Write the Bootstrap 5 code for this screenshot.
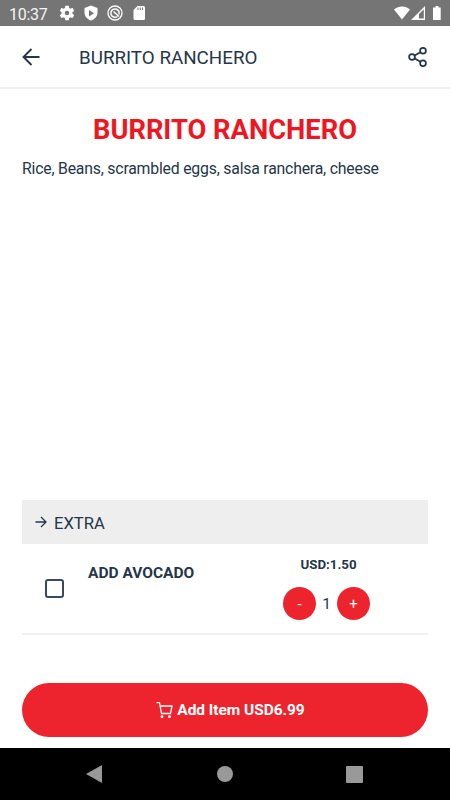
<!DOCTYPE html>
<html lang="en">
<head>
<meta charset="utf-8">
<meta name="viewport" content="width=device-width, initial-scale=1">
<title>Burrito Ranchero</title>
<link href="https://cdn.jsdelivr.net/npm/bootstrap@5.3.0/dist/css/bootstrap.min.css" rel="stylesheet">
<style>
  body { font-family: Roboto, "Liberation Sans", sans-serif; color: #25364a; line-height: 1.2; overflow: hidden; }
  svg { display: block; flex: none; }
  .screen { height: 800px; }
  .status-bar { height: 26px; background: #757575; padding: 0 7px 0 9px; }
  .clock { font-size: 16px; width: 50px; color: #f4f4f4; letter-spacing: -.3px; padding-top: 3px; }
  .app-bar { height: 63px; border-bottom: 2px solid #f0f0f0; padding: 0 22px 0 21px; }
  .app-title { font-size: 18.8px; margin-left: 37px; padding-top: 4px; }
  .content { padding: 0 22px; }
  .dish-name { font-size: 27.3px; color: #ee1621; margin: 25px 0 0; line-height: 32px; }
  .dish-text { font-size: 15.8px; letter-spacing: -.2px; line-height: 20px; margin: 13px 0 0; }
  .options { margin-bottom: 48px; }
  .group-head { height: 44px; background: #eee; font-size: 16.6px; padding-left: 13px; gap: 7px; }
  .group-name { padding-top: 3px; }
  .option { height: 91px; border-bottom: 2px solid #f1f1f1; }
  .option-check { width: 19px; height: 19px; margin: 35px 0 0 23px; border: 2px solid #3a495d; border-radius: 3px; background: #fff; }
  .option-name { font-size: 15.5px; line-height: 20px; margin: 19px 0 0 24px; }
  .option-side { width: 87px; margin-right: 58px; }
  .price { font-size: 13.3px; line-height: 18px; margin: 12px 0 0 4px; }
  .stepper { margin-top: 13px; font-size: 15.5px; }
  .step-count { padding-top: 2px; }
  .round-btn { width: 33px; height: 33px; background: #ed242e; color: #fff; font-size: 15px; line-height: 1; padding: 2px 0 0; }
  .buy { height: 54px; margin: 0 22px 11px; background: #ed242e; color: #fff; font-size: 15.5px; letter-spacing: -.05px; }
  .buy-label { padding-top: 2px; }
  .buy-inner { gap: 4px; margin-left: 11px; }
  .nav-keys { height: 52px; background: #000; padding: 0 87px 0 86px; }
</style>
<script src="https://cdn.jsdelivr.net/npm/bootstrap@5.3.0/dist/js/bootstrap.bundle.min.js"></script>
</head>
<body>
<div class="screen d-flex flex-column bg-white">
  <div class="status-bar d-flex align-items-center">
    <span class="clock">10:37</span>
    <svg width="16" height="16" viewBox="1.500 1.500 21 21" fill="#fff"><path d="M19.14 12.94c.04-.3.06-.61.06-.94s-.02-.64-.07-.94l2.03-1.58a.5.5 0 0 0 .12-.61l-1.92-3.32a.5.5 0 0 0-.59-.22l-2.39.96a7 7 0 0 0-1.62-.94l-.36-2.54A.48.48 0 0 0 13.92 2.400h-3.84a.48.48 0 0 0-.47.41l-.36 2.54c-.59.24-1.13.57-1.62.94l-2.39-.96a.5.5 0 0 0-.59.22L2.740 8.870a.48.48 0 0 0 .12.61l2.03 1.58a6 6 0 0 0 0 1.880l-2.030 1.580a.5.5 0 0 0-.12.61l1.920 3.320c.12.22.37.29.59.22l2.390-.96c.5.38 1.030.7 1.620.94l.36 2.540c.05.24.24.41.48.41h3.840c.24 0 .44-.17.47-.41l.36-2.540c.59-.24 1.130-.56 1.620-.94l2.390.96c.22.08.47 0 .59-.22l1.920-3.320a.48.48 0 0 0-.12-.61zM12 15a3 3 0 1 1 0-6 3 3 0 0 1 0 6z"/></svg>
    <svg class="ms-2" width="16" height="16" viewBox="0 0 16 16"><path fill="#fff" d="M8 .5 14.500 3v4.500c0 3.700-2.500 6.700-6.500 8-4-1.300-6.500-4.300-6.500-8V3z"/><path fill="#757575" d="m6 5 5 3.200-5 3.200z"/></svg>
    <svg class="ms-2" width="16" height="16" viewBox="0 0 16 16" fill="none" stroke="#fff"><circle cx="8" cy="8" r="7" stroke-width="1.300"/><path d="M10.500 11.500a4.200 4.200 0 1 1 1.500-2" stroke-width="1.500"/><path d="m6.500 6.500 5.500 5" stroke-width="1.500"/></svg>
    <svg class="ms-2" width="16" height="16" viewBox="0 0 16 16"><path fill="#fff" d="M6.500 1H12.500q1.500 0 1.500 1.500v11Q14 15 12.500 15H4q-1.500 0-1.500-1.500V5z"/><path stroke="#757575" d="M7 2.500V5M9.300 2.500V5M11.600 2.500V5"/></svg>
    <svg class="ms-auto" width="50" height="16" viewBox="0 0 50 16"><path fill="#fff" d="M1 4.500C5.500.5 12.500.5 17 4.500L9 14.500z"/><path fill="#fff" fill-rule="evenodd" d="M32 1v14H18zM30.800 4.200v9.300H26V9z"/><path fill="#fff" d="M42.500 1h3v1.500h2.200V15h-7.700V2.500h2.500z"/></svg>
  </div>
  <header class="app-bar d-flex align-items-center">
    <svg width="21" height="20" viewBox="0 0 21 20" fill="none" stroke="#25364a" stroke-width="1.900"><path d="M18.500 10H2.500M10.500 2 2.500 10l8 8"/></svg>
    <span class="app-title">BURRITO RANCHERO</span>
    <svg class="ms-auto" width="20" height="20" viewBox="0 0 20 20" fill="none" stroke="#25364a" stroke-width="1.700"><circle cx="4" cy="10" r="2.900"/><circle cx="15" cy="3.800" r="2.900"/><circle cx="15" cy="16.200" r="2.900"/><path d="m6.600 8.600 5.800-3.300M6.600 11.400l5.800 3.300"/></svg>
  </header>
  <main class="content flex-grow-1 d-flex flex-column">
    <h1 class="dish-name text-center fw-bold">BURRITO RANCHERO</h1>
    <p class="dish-text">Rice, Beans, scrambled eggs, salsa ranchera, cheese</p>
    <section class="options mt-auto">
      <div class="group-head d-flex align-items-center">
        <svg width="12" height="12" viewBox="0 0 12 12" fill="none" stroke="#25364a" stroke-width="1.300"><path d="M.5 6H11M6 1l5 5-5 5"/></svg>
        <span class="group-name">EXTRA</span>
      </div>
      <div class="option d-flex align-items-start">
        <span class="option-check" role="checkbox" aria-checked="false"></span>
        <span class="option-name fw-bold">ADD AVOCADO</span>
        <div class="option-side ms-auto text-center">
          <div class="price fw-bold">USD:1.50</div>
          <div class="stepper d-flex justify-content-between align-items-center">
            <button class="round-btn btn rounded-circle border-0">-</button>
            <span class="step-count">1</span>
            <button class="round-btn btn rounded-circle border-0">+</button>
          </div>
        </div>
      </div>
    </section>
  </main>
  <button class="buy btn rounded-pill border-0 p-0 fw-bold d-flex justify-content-center align-items-center">
    <span class="buy-inner d-flex align-items-center">
      <svg width="17" height="17" viewBox="0 0 17 17" fill="none" stroke="#fff" stroke-width="1.300"><path d="M.5 .7H3.500L5.500 11.500H14.500L16 4H4"/><circle cx="6" cy="14.800" r=".8" fill="#fff"/><circle cx="13.500" cy="14.800" r=".8" fill="#fff"/></svg>
      <span class="buy-label">Add Item USD6.99</span>
    </span>
  </button>
  <nav class="nav-keys d-flex justify-content-between align-items-center">
    <svg width="17" height="18" viewBox="0 0 17 18"><path fill="#999" d="M16 0v18L0 9z"/></svg>
    <svg width="16" height="16" viewBox="0 0 16 16"><circle cx="8" cy="8" r="8" fill="#999"/></svg>
    <svg width="17" height="17" viewBox="0 0 17 17"><rect width="17" height="17" rx="1" fill="#999"/></svg>
  </nav>
</div>
</body>
</html>
